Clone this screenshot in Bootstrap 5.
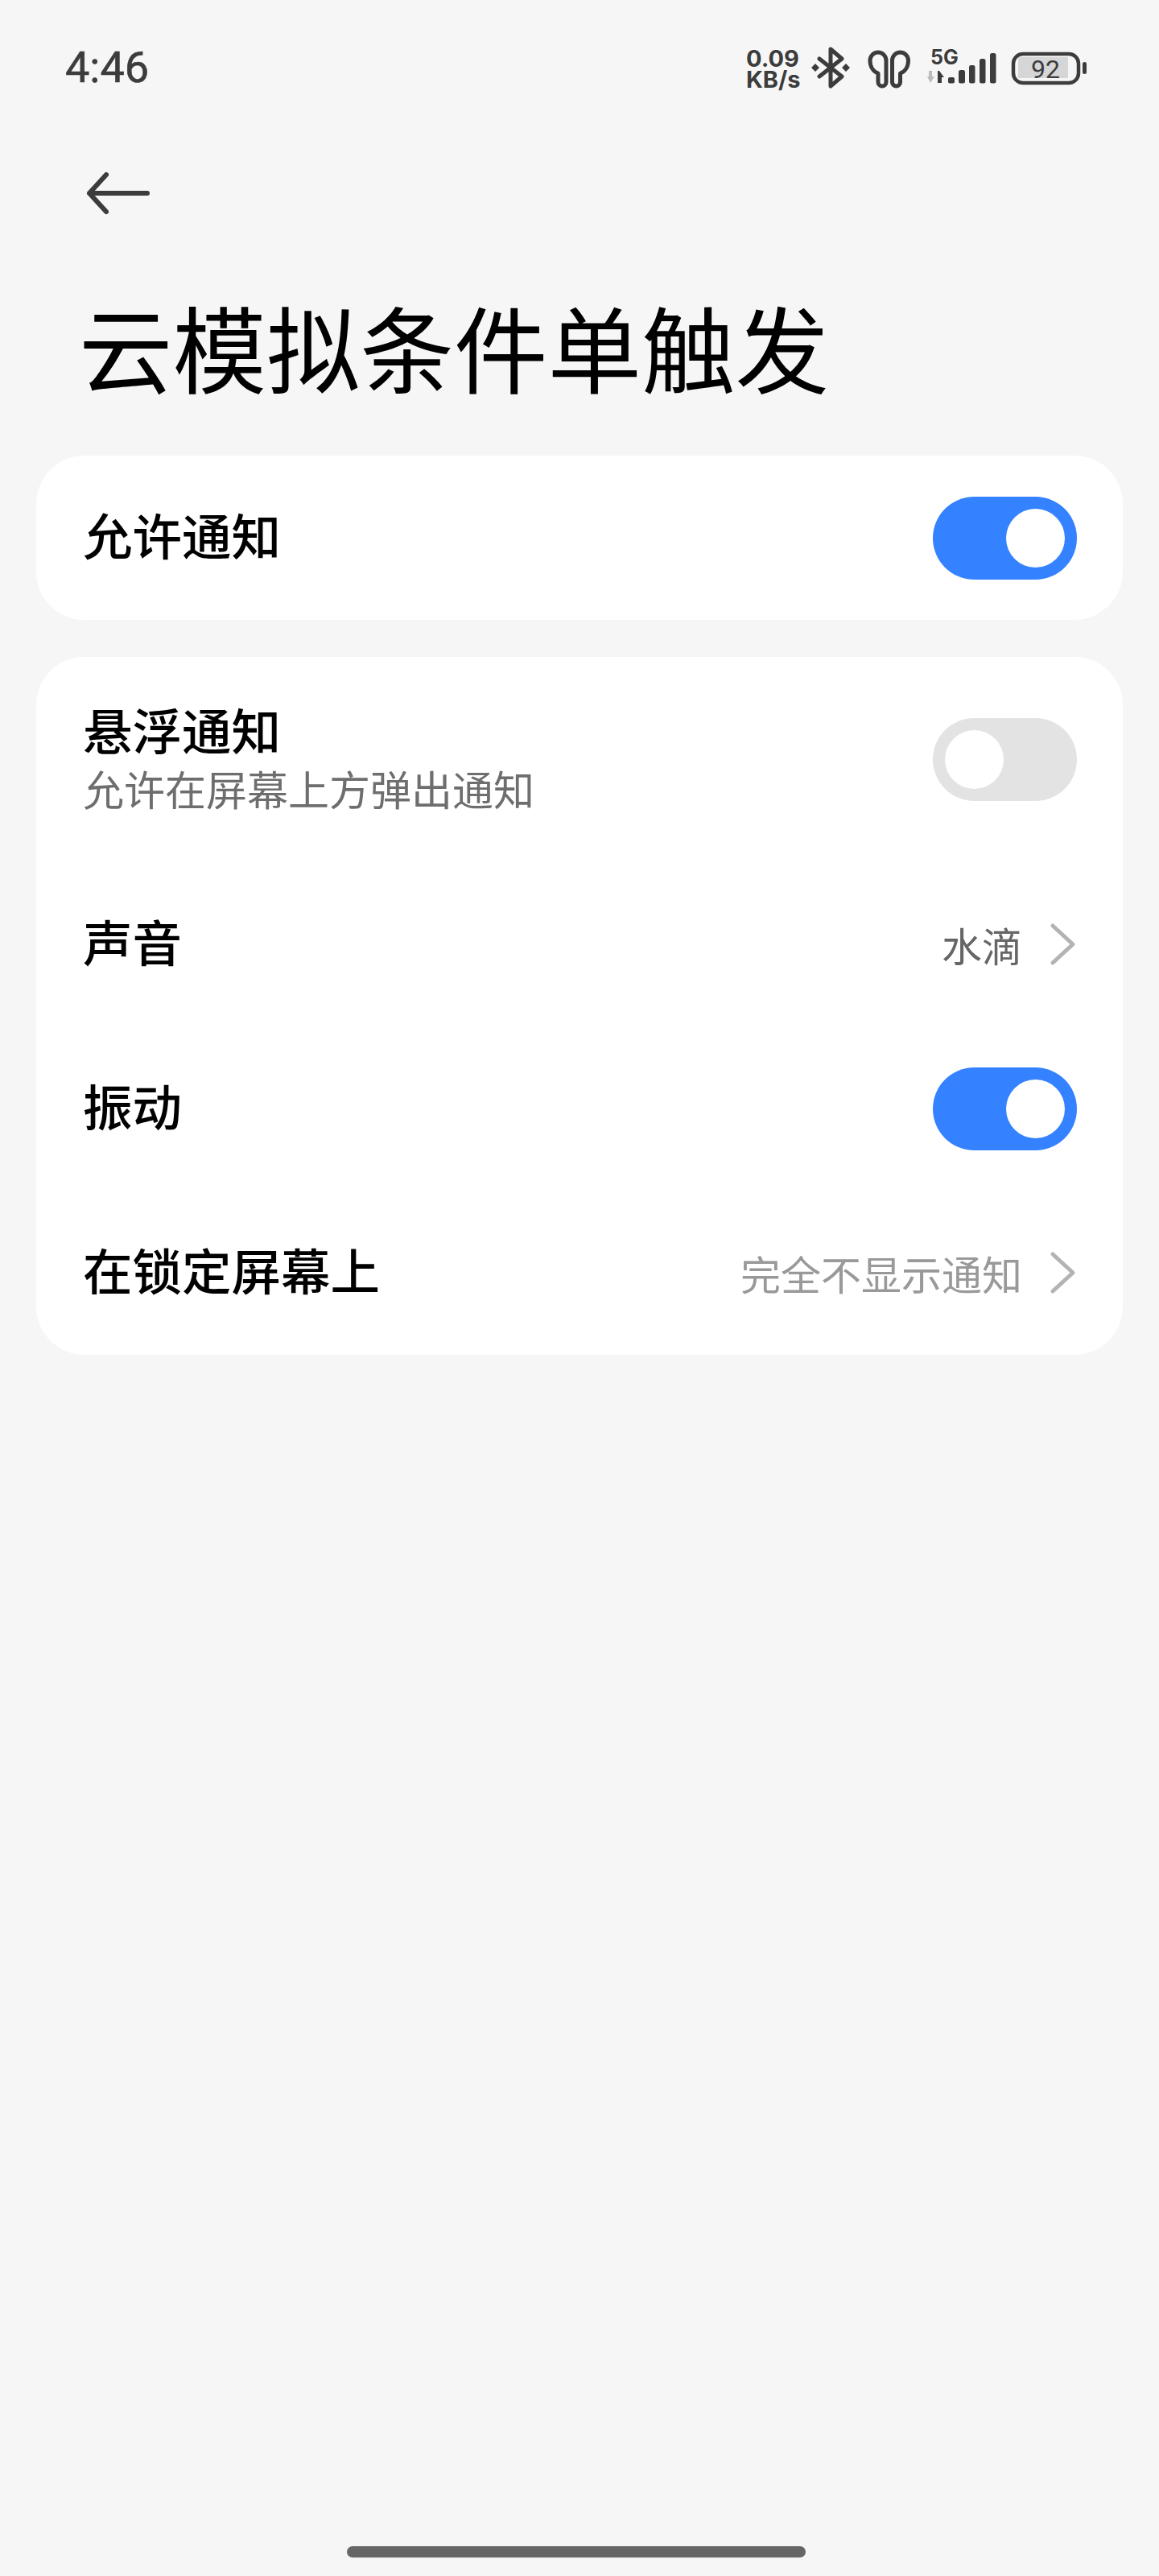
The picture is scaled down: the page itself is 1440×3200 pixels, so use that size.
<!DOCTYPE html>
<html lang="zh">
<head>
    <meta charset="UTF-8">
    <title>云模拟条件单触发</title>
    <link href="https://cdn.jsdelivr.net/npm/bootstrap@5.3.2/dist/css/bootstrap.min.css" rel="stylesheet">
    <style>
        body {
            background: #f6f6f6;
            font-family: "Noto Sans CJK SC", "Noto Sans", sans-serif;
            color: #000;
            width: 1440px;
            height: 3200px;
            overflow: hidden;
        }
        .status-bar { height: 140px; padding: 50px 89px 0 81px; color: #3c3c3c; }
        .status-time { font-family: Roboto, sans-serif; font-size: 54px; font-weight: 400; -webkit-text-stroke: 0.6px #3c3c3c; line-height: 1; margin-top: 7px; }
        .net-speed { font-family: Inter, sans-serif; font-size: 29px; font-weight: 700; line-height: 26px; width: 72px; margin-top: 10px; }
        .icon-bt { margin: 8px 0 0 7px; }
        .icon-buds { margin: 12px 0 0 17px; }
        .icon-signal { margin: 5px 0 0 17px; overflow: visible; }
        .icon-battery { margin: 14px 0 0 18px; overflow: visible; }
        .back-row { padding: 70px 0 0 106px; height: 130px; }
        .page-title { font-size: 116.5px; font-weight: 400; line-height: 160px; margin: 80px 0 56px 98px; }
        .group-card { margin: 0 45px 46px; background: #fff; border-radius: 60px; padding: 0 57px 0 58px; }
        .set-row { height: 204px; }
        .set-row.tall { height: 255px; }
        .row-name { font-size: 61.5px; line-height: 74px; font-weight: 500; }
        .set-row > .row-name { margin-bottom: 8px; }
        .text-stack { margin-bottom: 4px; }
        .row-sub { font-size: 51px; line-height: 72px; color: #6e6e6e; }
        .row-value { font-size: 50px; color: #999; margin-right: 34px; }
        .row-value.dark { color: #666; }
        .sw-track { width: 179px; height: 103px; border-radius: 52px; background: #3482ff; padding: 15px; }
        .sw-track.off { background: #e3e3e3; }
        .sw-knob { width: 73px; height: 73px; border-radius: 50%; background: #fff; }
        .home-bar { position: absolute; left: 431px; top: 3163px; width: 570px; height: 14px; border-radius: 7px; background: #666; }
    </style>
</head>
<body>
    <div class="status-bar d-flex justify-content-between">
        <div class="status-time">4:46</div>
        <div class="d-flex align-items-start">
            <div class="net-speed">0.09<br>KB/s</div>
            <svg class="icon-bt" width="52" height="52" viewBox="0 0 52 52" fill="none" stroke="#3c3c3c" stroke-width="5" stroke-linejoin="round" stroke-linecap="round">
                <path d="M12 15 L40 37 L26 49 V3 L40 15 L12 37"/>
                <path d="M7 21 L12 26 L7 31 L2 26Z M45 21 L50 26 L45 31 L40 26Z" fill="#3c3c3c" stroke="none"/>
            </svg>
            <svg class="icon-buds" width="60" height="50" viewBox="0 0 60 50" fill="none" stroke="#3c3c3c" stroke-width="5" stroke-linejoin="round">
                <path d="M16 40 V29 C10 27 6 21 6 13 A10 10 0 0 1 26 13 V40 A5 5 0 0 1 16 40 Z"/>
                <path d="M43.5 40 V29 C49.5 27 53.5 21 53.5 13 A10 10 0 0 0 33.5 13 V40 A5 5 0 0 0 43.5 40 Z"/>
            </svg>
            <svg class="icon-signal" width="86" height="52" viewBox="0 0 86 52">
                <text x="4" y="25" font-family="Inter, sans-serif" font-size="25" font-weight="700" fill="#3c3c3c">5G</text>
                <path d="M2 33 h4 v7 h3 l-5 8 l-4 -8 h2z" fill="#bbb"/>
                <path d="M15 33 l6 8 h-3 v7 h-5 v-15z" fill="#3c3c3c"/>
                <rect x="26" y="41" width="8" height="7.5" rx="2" fill="#3c3c3c"/>
                <rect x="39" y="32" width="8" height="16.5" rx="2.5" fill="#3c3c3c"/>
                <rect x="52" y="26" width="7.5" height="22.5" rx="2.5" fill="#3c3c3c"/>
                <rect x="65" y="18" width="7.5" height="30.5" rx="2.5" fill="#3c3c3c"/>
                <rect x="78" y="11" width="7.5" height="37.5" rx="2.5" fill="#3c3c3c"/>
            </svg>
            <svg class="icon-battery" width="95" height="42" viewBox="0 0 95 42">
                <rect x="3" y="3" width="81" height="36" rx="12" fill="none" stroke="#3c3c3c" stroke-width="4.5"/>
                <rect x="9" y="7" width="62" height="26" fill="#d6d6d6"/>
                <rect x="89" y="13" width="5" height="15" rx="2.5" fill="#3c3c3c"/>
                <text x="43" y="33" text-anchor="middle" font-family="Roboto, sans-serif" font-size="32" fill="#3c3c3c">92</text>
            </svg>
        </div>
    </div>

    <div class="back-row">
        <svg class="d-block" width="88" height="60" viewBox="0 0 88 60" fill="none" stroke="#3c3c3c" stroke-width="6" stroke-linecap="round" stroke-linejoin="round">
            <path d="M5 30 H77 M26 7 L5 30 L26 53"/>
        </svg>
    </div>

    <h1 class="page-title">云模拟条件单触发</h1>

    <div class="group-card">
        <div class="set-row d-flex align-items-center justify-content-between">
            <div class="row-name">允许通知</div>
            <div class="sw-track d-flex justify-content-end"><div class="sw-knob"></div></div>
        </div>
    </div>

    <div class="group-card">
        <div class="set-row tall d-flex align-items-center justify-content-between">
            <div class="text-stack">
                <div class="row-name">悬浮通知</div>
                <div class="row-sub">允许在屏幕上方弹出通知</div>
            </div>
            <div class="sw-track off d-flex"><div class="sw-knob"></div></div>
        </div>
        <div class="set-row d-flex align-items-center justify-content-between">
            <div class="row-name">声音</div>
            <div class="d-flex align-items-center">
                <span class="row-value dark">水滴</span>
                <svg width="34" height="54" viewBox="0 0 34 54" fill="none" stroke="#b3b3b3" stroke-width="5" stroke-linecap="round" stroke-linejoin="round"><path d="M4 4 L29 27 L4 50"/></svg>
            </div>
        </div>
        <div class="set-row d-flex align-items-center justify-content-between">
            <div class="row-name">振动</div>
            <div class="sw-track d-flex justify-content-end"><div class="sw-knob"></div></div>
        </div>
        <div class="set-row d-flex align-items-center justify-content-between">
            <div class="row-name">在锁定屏幕上</div>
            <div class="d-flex align-items-center">
                <span class="row-value">完全不显示通知</span>
                <svg width="34" height="54" viewBox="0 0 34 54" fill="none" stroke="#b3b3b3" stroke-width="5" stroke-linecap="round" stroke-linejoin="round"><path d="M4 4 L29 27 L4 50"/></svg>
            </div>
        </div>
    </div>

    <div class="home-bar"></div>

    <script src="https://cdn.jsdelivr.net/npm/bootstrap@5.3.2/dist/js/bootstrap.bundle.min.js"></script>
</body>
</html>
